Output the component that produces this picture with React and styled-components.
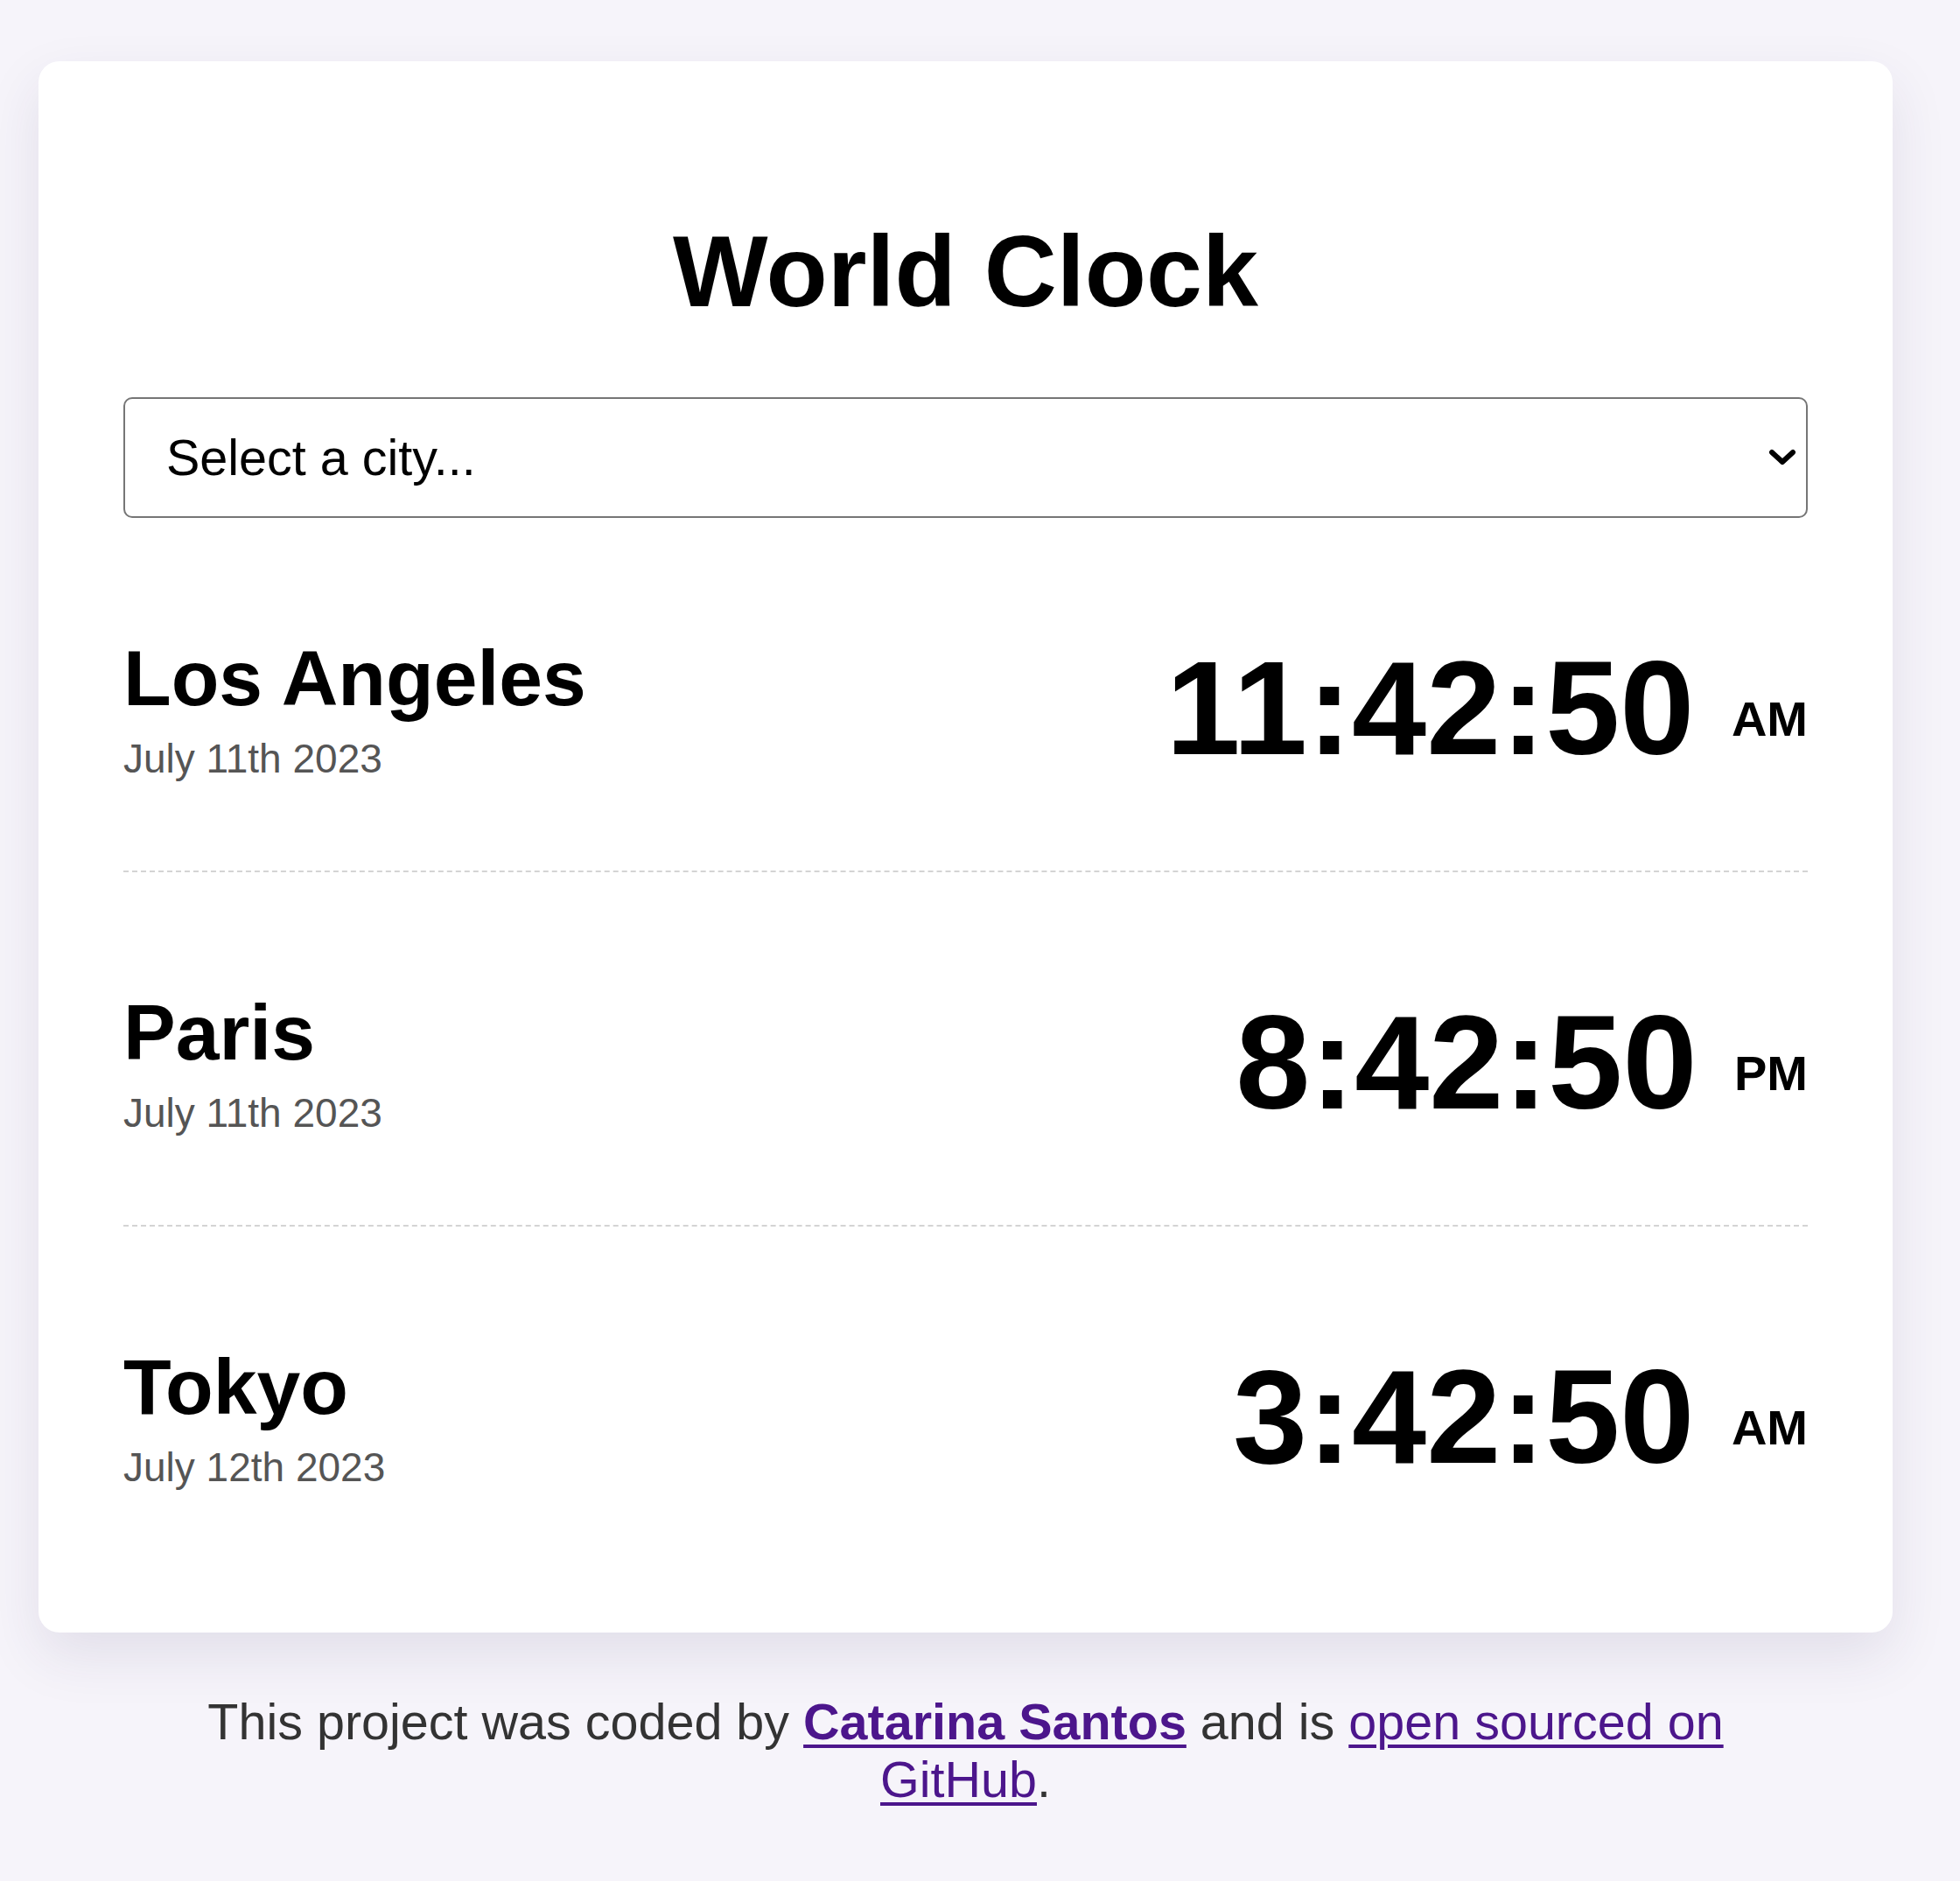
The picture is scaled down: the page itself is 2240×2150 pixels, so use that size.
import React from "react";
import styled, { createGlobalStyle } from "styled-components";

const GlobalStyle = createGlobalStyle`
  html, body {
    margin: 0;
    padding: 0;
    background: #f6f4fa;
    font-family: "Liberation Sans", Arial, Helvetica, sans-serif;
    color: #000;
  }
`;

const Page = styled.div`
  width: 2119px;
  margin: 70px 0 0 44px;
  padding-bottom: 40px;
`;

const Card = styled.main`
  background: #fff;
  border-radius: 24px;
  box-shadow: 0 26px 64px rgba(45, 35, 90, 0.1);
  padding: 174px 97px 61px;
`;

const Title = styled.h1`
  margin: 0 0 78px;
  font-size: 115px;
  font-weight: 700;
  text-align: center;
  line-height: normal;
`;

const SelectWrap = styled.div`
  position: relative;
`;

const CitySelect = styled.select`
  appearance: none;
  -webkit-appearance: none;
  display: block;
  width: 100%;
  height: 138px;
  box-sizing: border-box;
  border: 2px solid #767676;
  border-radius: 10px;
  background: #fff;
  padding: 0 80px 0 47px;
  font-family: "Liberation Sans", Arial, sans-serif;
  font-size: 57.5px;
  color: #000;
  outline: none;
`;

const Chevron = styled.svg`
  position: absolute;
  right: 13px;
  top: 50%;
  width: 32px;
  height: 20px;
  transform: translateY(-50%);
  pointer-events: none;
`;

const Row = styled.section`
  display: flex;
  align-items: center;
  justify-content: space-between;
  padding: 129px 0 98px;
  border-bottom: ${(p) => (p.$last ? "none" : "2px dashed #d4d4d4")};
`;

const CityInfo = styled.div`
  display: flex;
  flex-direction: column;
`;

const CityName = styled.h2`
  margin: 0;
  font-size: 89.5px;
  font-weight: 700;
  line-height: normal;
`;

const CityDate = styled.div`
  margin-top: 13px;
  font-size: 46px;
  color: #555;
  line-height: normal;
`;

const Time = styled.div`
  font-size: 153px;
  font-weight: 700;
  line-height: normal;
  white-space: nowrap;
`;

const Meridiem = styled.small`
  font-size: 56px;
  font-weight: 700;
  vertical-align: middle;
`;

const Footer = styled.footer`
  margin-top: 69px;
  padding: 0 97px;
  text-align: center;
  font-size: 57.5px;
  line-height: normal;
  color: #333;
`;

const Link = styled.a`
  color: #4c168c;
  text-decoration: underline;
  font-weight: ${(p) => (p.$bold ? 700 : 400)};
  text-underline-offset: 6px;
  text-decoration-thickness: 4px;
`;

const cities = [
  { name: "Los Angeles", date: "July 11th 2023", time: "11:42:50", ampm: "AM" },
  { name: "Paris", date: "July 11th 2023", time: "8:42:50", ampm: "PM" },
  { name: "Tokyo", date: "July 12th 2023", time: "3:42:50", ampm: "AM" },
];

export default function App() {
  return (
    <>
      <GlobalStyle />
      <Page>
        <Card>
          <Title>World Clock</Title>
          <SelectWrap>
            <CitySelect defaultValue="">
              <option value="">Select a city...</option>
              <option value="local">My current location</option>
              <option value="Europe/London">London</option>
              <option value="Australia/Sydney">Sydney</option>
            </CitySelect>
            <Chevron viewBox="0 0 32 20" aria-hidden="true">
              <path
                d="M4 4 L16 15 L28 4"
                fill="none"
                stroke="#000"
                strokeWidth="6"
                strokeLinecap="round"
                strokeLinejoin="round"
              />
            </Chevron>
          </SelectWrap>
          {cities.map((c, i) => (
            <Row key={c.name} $last={i === cities.length - 1}>
              <CityInfo>
                <CityName>{c.name}</CityName>
                <CityDate>{c.date}</CityDate>
              </CityInfo>
              <Time>
                {c.time} <Meridiem>{c.ampm}</Meridiem>
              </Time>
            </Row>
          ))}
        </Card>
        <Footer>
          This project was coded by{" "}
          <Link href="#" $bold>
            Catarina Santos
          </Link>{" "}
          and is{" "}
          <Link href="#">open sourced on GitHub</Link>.
        </Footer>
      </Page>
    </>
  );
}
